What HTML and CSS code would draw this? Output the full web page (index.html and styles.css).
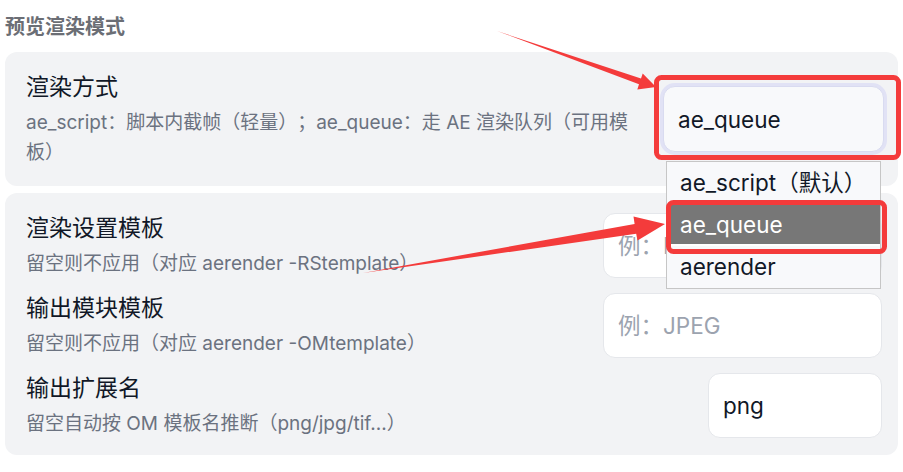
FILE: index.html
```html
<!DOCTYPE html>
<html>
<head>
    <title>预览渲染模式</title>
    <link rel="stylesheet" href="styles.css">
</head>
<body>
    <div class="page">
        <h3 class="section-title">预览渲染模式</h3>

        <div class="card">
            <div class="row">
                <div class="info">
                    <div class="label">渲染方式</div>
                    <div class="desc">ae_script：脚本内截帧（轻量）；ae_queue：走 AE 渲染队列（可用模板）</div>
                </div>
                <div class="select-wrap">
                    <div class="select">ae_queue</div>
                    <ul class="options">
                        <li>ae_script（默认）</li>
                        <li class="active">ae_queue</li>
                        <li>aerender</li>
                    </ul>
                </div>
            </div>
        </div>

        <div class="card rows">
            <div class="row">
                <div class="info">
                    <div class="label">渲染设置模板</div>
                    <div class="desc">留空则不应用（对应 aerender -RStemplate）</div>
                </div>
                <input type="text" class="field" placeholder="例：Best Settings">
            </div>
            <div class="row">
                <div class="info">
                    <div class="label">输出模块模板</div>
                    <div class="desc">留空则不应用（对应 aerender -OMtemplate）</div>
                </div>
                <input type="text" class="field" placeholder="例：JPEG">
            </div>
            <div class="row">
                <div class="info">
                    <div class="label">输出扩展名</div>
                    <div class="desc">留空自动按 OM 模板名推断（png/jpg/tif...）</div>
                </div>
                <input type="text" class="field short" value="png">
            </div>
        </div>

        <!-- annotation layer -->
        <svg class="annotations" width="903" height="472" viewBox="0 0 903 472">
            <polygon points="497,31 641,78.6 642.7,73.5 656,87 637.3,89.5 639,84.2" fill="#f43b3b"/>
            <polygon points="363,273 634.6,223.9 633.5,216.5 665,224 637.5,240.5 636.2,233.7" fill="#f43b3b"/>
            <rect x="656.5" y="77.5" width="242" height="80" rx="5" fill="none" stroke="#f43b3b" stroke-width="5"/>
            <rect x="668.5" y="202.5" width="216" height="49" rx="5" fill="none" stroke="#f43b3b" stroke-width="5"/>
        </svg>
    </div>
</body>
</html>
```

FILE: styles.css
```css
body {
    margin: 0;
    background-color: #fff;
    font-family: Inter, "Noto Sans CJK SC", sans-serif;
}
.page {
    position: relative;
    width: 903px;
    height: 472px;
    padding: 14px 5px 0 5px;
    box-sizing: border-box;
    overflow: hidden;
    text-spacing-trim: space-all;
}
.section-title {
    margin: 0 0 11px 0;
    font-size: 20px;
    line-height: 27px;
    font-weight: 700;
    color: #6b6e75;
}
.card {
    background-color: #f2f3f5;
    border-radius: 12px;
    padding: 18px 14px 18px 21px;
    margin-bottom: 7px;
}
.card.rows {
    display: flex;
    flex-direction: column;
    gap: 12px;
    padding: 18px 16px 16px 21px;
}
.row {
    display: flex;
    align-items: center;
    gap: 18px;
}
.info {
    flex: 1;
    min-width: 0;
}
.label {
    font-size: 23px;
    line-height: 34px;
    color: #111827;
    margin-bottom: 4px;
}
.desc {
    font-size: 19px;
    line-height: 30px;
    color: #6b7280;
}
.select-wrap {
    position: relative;
    width: 221px;
}
.select {
    height: 66px;
    box-sizing: border-box;
    padding-left: 14px;
    display: flex;
    align-items: center;
    font-size: 22.5px;
    color: #111827;
    background-color: #f8f9fb;
    border: 1px solid #d9dbf0;
    border-radius: 12px;
    box-shadow: 0 0 0 3px #e1e2f5;
}
.options {
    position: absolute;
    left: 3px;
    top: 75px;
    width: 215px;
    margin: 0;
    padding: 0;
    list-style: none;
    box-sizing: border-box;
    background-color: #f8f9fb;
    border: 1px solid #c6c6c6;
    z-index: 2;
}
.options li {
    height: 42px;
    line-height: 42px;
    padding-left: 13px;
    font-size: 22.5px;
    color: #111827;
}
.options li.active {
    background-color: #777;
    color: #fff;
    box-shadow: inset 0 -2px 0 #fff;
}
.field {
    width: 279px;
    height: 65px;
    box-sizing: border-box;
    padding: 0 14px;
    border: 1px solid #e5e7eb;
    border-radius: 12px;
    background-color: #fff;
    font-family: Inter, "Noto Sans CJK SC", sans-serif;
    font-size: 22.5px;
    color: #111827;
    outline: none;
}
.field.short {
    width: 174px;
}
.field::placeholder {
    color: #9ca3af;
}
.annotations {
    position: absolute;
    top: 0;
    left: 0;
    z-index: 3;
    pointer-events: none;
}
```
